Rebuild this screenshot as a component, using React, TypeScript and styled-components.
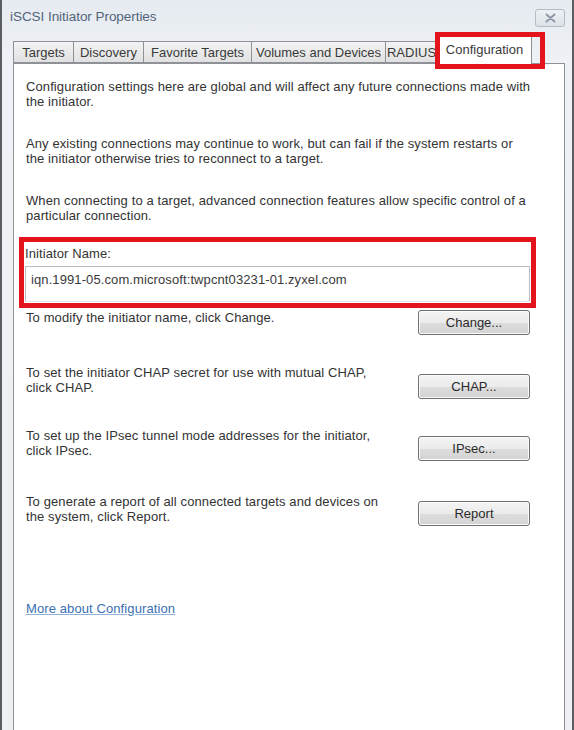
import React from 'react';
import styled, { createGlobalStyle } from 'styled-components';

const GlobalStyle = createGlobalStyle`
  html, body {
    margin: 0;
    padding: 0;
    background: #e9edf2;
  }
  body {
    font-family: "Liberation Sans", Arial, sans-serif;
  }
`;

const Window = styled.div`
  width: 574px;
  height: 730px;
  box-sizing: border-box;
  display: flex;
  flex-direction: column;
  background: linear-gradient(#e6ebf1, #eef1f5 60px, #eef0f3);
  border-left: 2px solid #5a5d62;
  border-right: 2px solid #5a5d62;
  overflow: hidden;
`;

const TitleBar = styled.div`
  height: 32px;
  flex: none;
  display: flex;
  align-items: center;
  justify-content: space-between;
  padding: 0 7px 0 8px;
`;

const Title = styled.span`
  font-size: 13.5px;
  color: #52647a;
  letter-spacing: -0.05px;
  margin-top: 1px;
`;

const CloseButton = styled.div`
  width: 30px;
  height: 18px;
  margin-top: 3px;
  box-sizing: border-box;
  display: flex;
  align-items: center;
  justify-content: center;
  border: 1px solid #b4bbc4;
  border-radius: 3px;
  background: linear-gradient(#eef1f4, #dde2e8);
`;

const TabStrip = styled.div`
  height: 31px;
  flex: none;
  display: flex;
  align-items: flex-end;
  padding-left: 11px;
`;

const Tab = styled.div<{ $width: number; $active?: boolean }>`
  position: relative;
  width: ${(p) => p.$width}px;
  height: ${(p) => (p.$active ? 29 : 22)}px;
  box-sizing: border-box;
  margin-right: -1px;
  margin-bottom: ${(p) => (p.$active ? -1 : 0)}px;
  padding-top: ${(p) => (p.$active ? 6 : 3)}px;
  border: 1px solid #8e9297;
  border-bottom: ${(p) => (p.$active ? 'none' : '1px solid #8e9297')};
  background: ${(p) => (p.$active ? '#ffffff' : 'linear-gradient(#f3f3f3, #e1e1e1)')};
  z-index: ${(p) => (p.$active ? 2 : 1)};
  font-size: 13px;
  color: #3a3a3a;
  text-align: center;
  white-space: nowrap;
  overflow: hidden;
`;

/* red callout drawn over the selected tab */
const TabCallout = styled.div`
  position: absolute;
  left: 435px;
  top: 32px;
  width: 110px;
  height: 37px;
  box-sizing: border-box;
  border: 5px solid #e3141c;
  z-index: 3;
`;

const Panel = styled.div`
  flex: 1;
  margin: 0 7px 0 11px;
  padding: 15px 10px 0 12px;
  background: #ffffff;
  border: 1px solid #8e9297;
  border-bottom: none;
  color: #333333;
  font-size: 13px;
  letter-spacing: 0.1px;
  line-height: 15px;
  white-space: nowrap;
`;

const Paragraph = styled.p<{ $after?: number }>`
  margin: 0 0 ${(p) => p.$after ?? 27}px;
`;

const NameGroup = styled.div`
  margin: 0 18px 2px -7px;
  border: 5px solid #e3141c;
  padding: 4px 0 1px 1px;
`;

const NameLabel = styled.div`
  margin: 0 0 5px 0;
`;

const NameField = styled.div`
  height: 36px;
  box-sizing: border-box;
  margin-right: 1px;
  padding: 5px 5px 0 5px;
  border: 1px solid #b9bcc2;
  border-bottom-color: #e4e6ea;
  color: #3a3a3a;
`;

const ActionRow = styled.div<{ $space: number }>`
  display: flex;
  justify-content: space-between;
  align-items: flex-start;
  margin-top: ${(p) => p.$space}px;
  padding-right: 24px;
`;

const ActionText = styled.div`
  flex: 1;
`;

const PushButton = styled.button<{ $offset: number }>`
  width: 112px;
  height: 25px;
  flex: none;
  margin-top: ${(p) => p.$offset}px;
  box-sizing: border-box;
  border: 1px solid #707070;
  border-radius: 3px;
  background: linear-gradient(#f4f4f4 0%, #ebebeb 50%, #dddddd 51%, #d3d3d3 100%);
  box-shadow: inset 0 0 0 1px #fcfcfc;
  font-family: "Liberation Sans", Arial, sans-serif;
  font-size: 13px;
  color: #2a2a2a;
  padding: 0;
`;

const HelpLink = styled.a`
  display: inline-block;
  margin-top: 75px;
  color: #3b6fb4;
  text-decoration: underline;
  text-decoration-color: #8fb2dc;
  cursor: pointer;
`;

const tabs = [
  { label: 'Targets', width: 61 },
  { label: 'Discovery', width: 71 },
  { label: 'Favorite Targets', width: 109 },
  { label: 'Volumes and Devices', width: 135 },
  { label: 'RADIUS', width: 53 },
  { label: 'Configuration', width: 95, active: true },
];

const actions = [
  { lines: ['To modify the initiator name, click Change.'], button: 'Change...', space: 0, offset: 0 },
  {
    lines: ['To set the initiator CHAP secret for use with mutual CHAP,', 'click CHAP.'],
    button: 'CHAP...',
    space: 30,
    offset: 9,
  },
  {
    lines: ['To set up the IPsec tunnel mode addresses for the initiator,', 'click IPsec.'],
    button: 'IPsec...',
    space: 29,
    offset: 8,
  },
  {
    lines: ['To generate a report of all connected targets and devices on', 'the system, click Report.'],
    button: 'Report',
    space: 33,
    offset: 7,
  },
];

const CloseIcon = () => (
  <svg width="11" height="10" viewBox="0 0 11 10">
    <path d="M1.5 1.5 L9.5 8.5 M9.5 1.5 L1.5 8.5" stroke="#8f99a6" strokeWidth="2" strokeLinecap="round" />
  </svg>
);

export default function App() {
  return (
    <>
      <GlobalStyle />
      <Window>
        <TitleBar>
          <Title>iSCSI Initiator Properties</Title>
          <CloseButton>
            <CloseIcon />
          </CloseButton>
        </TitleBar>

        <TabStrip>
          {tabs.map((t) => (
            <Tab key={t.label} $width={t.width} $active={t.active}>
              {t.label}
            </Tab>
          ))}
        </TabStrip>
        <TabCallout />

        <Panel>
          <Paragraph>
            Configuration settings here are global and will affect any future connections made with
            <br />
            the initiator.
          </Paragraph>
          <Paragraph>
            Any existing connections may continue to work, but can fail if the system restarts or
            <br />
            the initiator otherwise tries to reconnect to a target.
          </Paragraph>
          <Paragraph $after={14}>
            When connecting to a target, advanced connection features allow specific control of a
            <br />
            particular connection.
          </Paragraph>

          <NameGroup>
            <NameLabel>Initiator Name:</NameLabel>
            <NameField>iqn.1991-05.com.microsoft:twpcnt03231-01.zyxel.com</NameField>
          </NameGroup>

          {actions.map((a) => (
            <ActionRow key={a.button} $space={a.space}>
              <ActionText>
                {a.lines.map((l) => (
                  <div key={l}>{l}</div>
                ))}
              </ActionText>
              <PushButton $offset={a.offset}>{a.button}</PushButton>
            </ActionRow>
          ))}

          <HelpLink>More about Configuration</HelpLink>
        </Panel>
      </Window>
    </>
  );
}
